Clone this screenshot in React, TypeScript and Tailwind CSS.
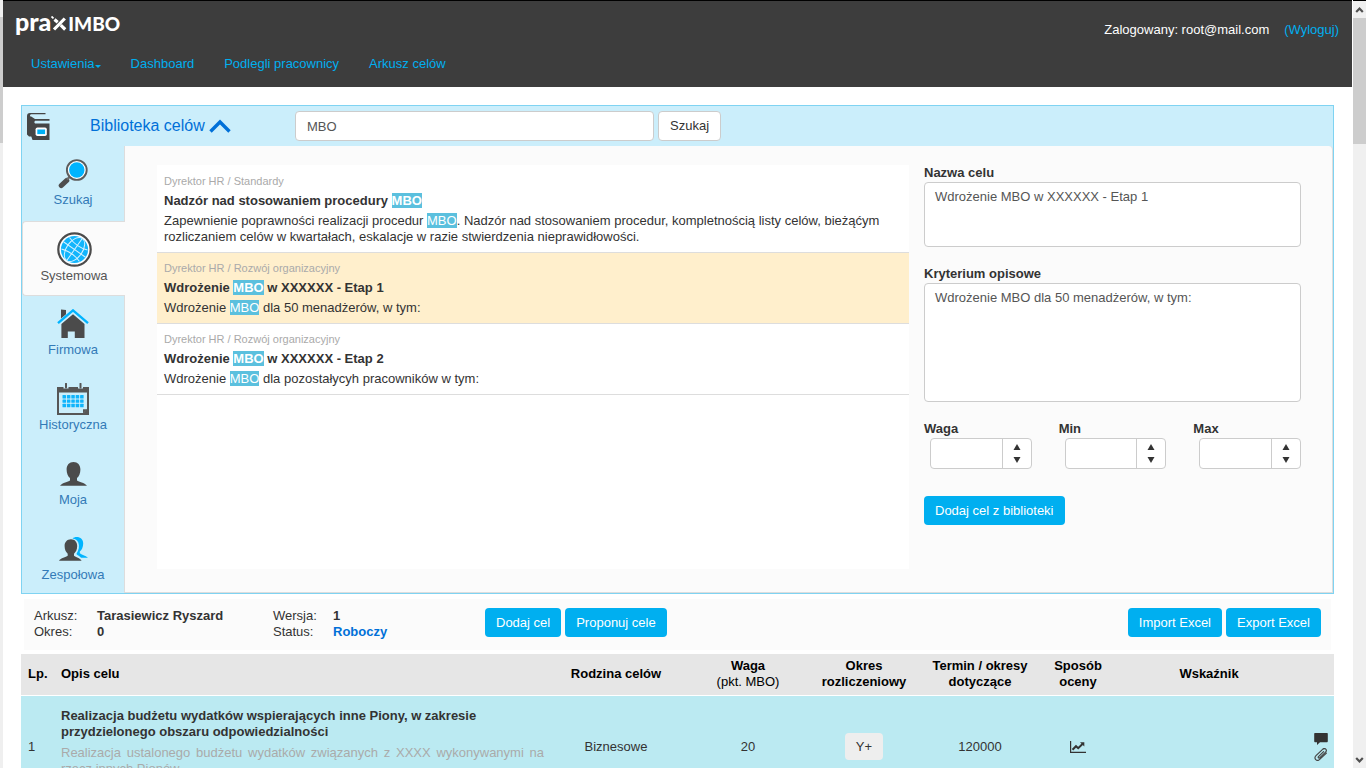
import { useState, type ReactNode } from 'react';
import clsx from 'clsx';

function BookIcon() {
  return (
    <svg width="23" height="27" viewBox="0 0 23 27" aria-hidden="true">
      <path
        fill="#454545"
        d="M0 3C0 1 1 0 3 0H18.500v1.200H4.600C2.800 1.200 2.400 3.400 4.200 3.600L8 5.900H22.500v1.900H8.600C7 7.800 7 10.600 8.600 10.600H22.500V27H5.500l-1.200-3.500H2L0 21.500Z"
      />
      <rect x="8.600" y="14.500" width="11.200" height="8.600" rx="1.800" fill="#fff" />
      <rect x="10.300" y="16.500" width="7.800" height="4.600" fill="#00b0f5" />
    </svg>
  );
}

function SearchIcon() {
  return (
    <svg width="30" height="30" viewBox="0 0 30 30" aria-hidden="true">
      <path d="M3.200 26.600 8.800 21.400" stroke="#4d4d4d" strokeWidth="5" strokeLinecap="round" />
      <path d="m9 20.500 3-3" stroke="#6d6d6d" strokeWidth="2.400" />
      <circle cx="18.800" cy="11" r="9.900" fill="#fff" stroke="#5c5c5c" strokeWidth="1.900" />
      <circle cx="18.800" cy="11" r="7.700" fill="#00b4ff" />
    </svg>
  );
}

function GlobeIcon() {
  return (
    <svg width="35" height="35" viewBox="0 0 35 35" aria-hidden="true">
      <circle cx="17.500" cy="17.500" r="16.200" fill="#fff" stroke="#4b4b4b" strokeWidth="2.200" />
      <circle cx="17.500" cy="17.500" r="13.600" fill="#12b5fc" />
      <g fill="none" stroke="#d5f1ff" strokeWidth="1" transform="rotate(35 17.5 17.5)">
        <ellipse cx="17.500" cy="17.500" rx="8" ry="13.600" />
        <path d="M17.500 4v27M4 17.500h27M6.500 10.500q11 4 22 0M6.500 24.500q11-4 22 0" />
      </g>
    </svg>
  );
}

function HouseIcon() {
  return (
    <svg width="32" height="29" viewBox="0 0 32 29" aria-hidden="true">
      <path fill="#4b4b4b" d="M4 .500 9 1v4.200L4 9.500Z" />
      <path fill="#4b4b4b" d="M16 5.200 27.500 15v14H17.800v-6.600h-7V29H4.400V15Z" />
      <path d="M1 14.200 16 1.400l15 12.800" fill="none" stroke="#00b4ff" strokeWidth="2.400" />
    </svg>
  );
}

function CalendarIcon() {
  return (
    <svg width="32" height="32" viewBox="0 0 32 32" aria-hidden="true">
      <path fill="#565656" fillRule="evenodd" d="M0 4h32v28H0Zm2 5.500V30h24.500l3.500-3.800V9.500Z" />
      <path fill="#565656" d="M26 30.500v-4.300h4.500Z" />
      <path d="M9 0v5.500M23.500 0v5.500" stroke="#cbeefb" strokeWidth="5" />
      <path d="M9 .800v3.800M23.500.800v3.800" stroke="#565656" strokeWidth="2" strokeLinecap="round" />
      {[12, 16.4, 20.8].map((y) =>
        [5.5, 9.9, 14.3, 18.7, 23.1].map((x) => (
          <rect key={`${x}-${y}`} x={x} y={y} width="3.500" height="3.400" rx=".5" fill="#10b4fb" />
        )),
      )}
    </svg>
  );
}

function PersonIcon() {
  return (
    <svg width="27" height="24" viewBox="0 0 27 24" aria-hidden="true">
      <path
        fill="#4b4b4b"
        d="M13.500 0c4.200 0 6.900 3 6.900 7.500 0 4-1.500 7-3.400 8.600v2.300c1.800 1.700 7.600 2 10 5.300H0c2.400-3.300 8.200-3.600 10-5.300v-2.300C8.100 14.500 6.600 11.500 6.600 7.500 6.600 3 9.300 0 13.500 0Z"
      />
    </svg>
  );
}

function TeamIcon() {
  return (
    <svg width="29" height="24" viewBox="0 0 29 24" aria-hidden="true">
      <path
        fill="#00b4ff"
        d="M17.500 0C21.700 0 24.200 2.600 24.200 6.400c0 3.600-1.600 6.700-3.400 8.200v1.700c1.500 1.500 5.700 2.300 8.200 4.400h-7c-1-1.700-3.600-2.300-4.600-3.800 2.400-3.400 3.300-7.600 1.900-11.300C18.400 3.200 16.300 2 13.500 1.500 14.600.500 16 0 17.500 0Z"
      />
      <path
        fill="#4b4b4b"
        d="M12 2.300c3.900 0 6.200 2.800 6.200 6.800 0 3.600-1.500 6.200-3.200 7.600v2c1.700 1.500 6 2 7.600 5H0c1.600-3 7-3.500 8.700-5v-2C7 15.300 5.600 12.700 5.600 9.100c0-4 2.500-6.800 6.400-6.800Z"
      />
    </svg>
  );
}

function ChartIcon() {
  return (
    <svg width="16" height="12" viewBox="0 0 16 12" aria-hidden="true">
      <path d="M.6 0v11.300H16" fill="none" stroke="#333" strokeWidth="1.200" />
      <path d="m2.500 8.800 3.500-3.600 2.200 2L12.500 3" fill="none" stroke="#333" strokeWidth="2" />
      <path d="M10 1.200h4.300v4.300Z" fill="#333" />
    </svg>
  );
}

function CommentIcon() {
  return (
    <svg width="14" height="12" viewBox="0 0 14 12" aria-hidden="true">
      <path d="M.8 0h12.400l.6.600v8l-.6.600H6L3 12V9.200H.8L.2 8.600v-8Z" fill="#333" />
    </svg>
  );
}

function PaperclipIcon() {
  return (
    <svg width="14" height="13" viewBox="0 0 14 13" aria-hidden="true">
      <path
        d="M9.600 3.600 4.500 8.700c-.8.900.3 1.900 1.100 1.200l6-5.800c2.300-2.300-.9-4.800-3-2.700L2 7.600c-2.900 2.900.9 6.500 3.700 3.800l6.700-6.300"
        fill="none"
        stroke="#444"
        strokeWidth="1.200"
        strokeLinecap="round"
      />
    </svg>
  );
}

const navItems = ['Dashboard', 'Podlegli pracownicy', 'Arkusz celów'];

const tabs = [
  { name: 'Szukaj', icon: <SearchIcon /> },
  { name: 'Systemowa', icon: <GlobeIcon /> },
  { name: 'Firmowa', icon: <HouseIcon /> },
  { name: 'Historyczna', icon: <CalendarIcon /> },
  { name: 'Moja', icon: <PersonIcon /> },
  { name: 'Zespołowa', icon: <TeamIcon /> },
];

const goals = [
  {
    category: 'Dyrektor HR / Standardy',
    title: 'Nadzór nad stosowaniem procedury MBO',
    text: 'Zapewnienie poprawności realizacji procedur MBO. Nadzór nad stosowaniem procedur, kompletnością listy celów, bieżąćym rozliczaniem celów w kwartałach, eskalacje w razie stwierdzenia nieprawidłowości.',
  },
  {
    category: 'Dyrektor HR / Rozwój organizacyjny',
    title: 'Wdrożenie MBO w XXXXXX - Etap 1',
    text: 'Wdrożenie MBO dla 50 menadżerów, w tym:',
  },
  {
    category: 'Dyrektor HR / Rozwój organizacyjny',
    title: 'Wdrożenie MBO w XXXXXX - Etap 2',
    text: 'Wdrożenie MBO dla pozostałycyh pracowników w tym:',
  },
];

function Highlight({ text, phrase }: { text: string; phrase: string }) {
  if (!phrase) return <>{text}</>;
  return (
    <>
      {text.split(phrase).map((part, i) => (
        <span key={i}>
          {i > 0 && <mark className="bg-[#5bc0de] text-white">{phrase}</mark>}
          {part}
        </span>
      ))}
    </>
  );
}

function BlueButton({ children }: { children: ReactNode }) {
  return (
    <button className="h-[29px] px-[11px] rounded bg-[#00aff0] text-white hover:bg-[#009bd6]">{children}</button>
  );
}

function NumberField({ id, label }: { id: string; label: string }) {
  const [value, setValue] = useState('');
  const step = (by: number) => setValue(String((Number(value) || 0) + by));

  return (
    <div>
      <label htmlFor={id} className="block h-[17px] font-bold">
        {label}
      </label>
      <div className="ml-1.5 flex h-[31px] rounded border border-[#ccc] bg-white">
        <input
          id={id}
          value={value}
          onChange={(e) => setValue(e.target.value)}
          className="min-w-0 flex-1 px-2 text-[#555] outline-none"
        />
        <div className="flex w-[29px] flex-col items-center justify-center gap-[7px] border-l border-[#ccc]">
          <button aria-label={`${label} +`} onClick={() => step(1)}>
            <svg width="8" height="6" viewBox="0 0 8 6" className="block">
              <path d="M4 0 7.500 6h-7Z" fill="#333" />
            </svg>
          </button>
          <button aria-label={`${label} -`} onClick={() => step(-1)}>
            <svg width="8" height="6" viewBox="0 0 8 6" className="block">
              <path d="M4 6 7.500 0h-7Z" fill="#333" />
            </svg>
          </button>
        </div>
      </div>
    </div>
  );
}

function Header() {
  return (
    <header className="h-[87px] border-t border-black bg-[#3d3d3d]">
      <div className="flex h-[47px] items-start justify-between pl-3 pr-[13px]">
        <a href="#" aria-label="praxIMBO" className="flex items-baseline font-['Lato',sans-serif] font-black leading-[40px] text-white">
          <span className="text-[25px]">pra</span>
          <svg width="17" height="15" viewBox="0 0 17 15" aria-hidden="true">
            <path d="m3.500 3.500 3.200 2.700M9.800 9.200l4.400 4.300M13.800 2.500 3 13.500" stroke="#fff" strokeWidth="3.200" />
            <path d="m.5.500 2 1.800" stroke="#fff" strokeWidth="1.800" />
          </svg>
          <span className="text-[19px]">IMBO</span>
        </a>
        <div className="flex gap-[15px] pt-[21px] text-white">
          <span>Zalogowany: root@mail.com</span>
          <a href="#" className="text-[#00aff0]">
            (Wyloguj)
          </a>
        </div>
      </div>
      <nav className="flex gap-[30px] pl-7 pt-2 text-[#00aff0]">
        <a href="#" className="flex items-center">
          Ustawienia
          <span className="mt-1 border-x-[3px] border-t-[3px] border-x-transparent border-t-[#00aff0]" />
        </a>
        {navItems.map((item) => (
          <a key={item} href="#">
            {item}
          </a>
        ))}
      </nav>
    </header>
  );
}

function Library() {
  const [open, setOpen] = useState(true);
  const [phrase, setPhrase] = useState('MBO');
  const [activeTab, setActiveTab] = useState('Systemowa');
  const [selected, setSelected] = useState(1);

  return (
    <section className="border border-[#7fd3f2] bg-[#cbeefb]">
      <div className="flex h-10 items-center pl-[5px]">
        <BookIcon />
        <button
          onClick={() => setOpen(!open)}
          className="ml-10 flex w-[205px] items-center gap-1 text-base text-[#0070d8]"
        >
          Biblioteka celów
          <svg width="22" height="14" viewBox="0 0 22 14" aria-hidden="true">
            <path d="M1.500 12.500 11 3l9.500 9.500" fill="none" stroke="#0070d8" strokeWidth="3.400" />
          </svg>
        </button>
        <form className="flex gap-1" onSubmit={(e) => e.preventDefault()}>
          <input
            aria-label="Szukaj"
            value={phrase}
            onChange={(e) => setPhrase(e.target.value)}
            className="h-[30px] w-[359px] rounded border border-[#ccc] bg-white px-[11px] text-[#555] outline-none"
          />
          <button className="h-[30px] rounded border border-[#ccc] bg-white px-[11px]">Szukaj</button>
        </form>
      </div>

      {open && (
        <div className="flex">
          <div className="w-[103px] shrink-0">
            {tabs.map((tab) => (
              <button
                key={tab.name}
                onClick={() => setActiveTab(tab.name)}
                className={clsx(
                  'flex h-[75px] w-full flex-col items-center pt-[9px] last:h-[72px]',
                  tab.name === activeTab
                    ? 'rounded-l border-y border-l border-[#ddd] bg-[#fbfbfb] text-[#555]'
                    : 'border-r border-[#ddd] text-[#337ab7]',
                )}
              >
                <span className="flex h-[37px] items-center">{tab.icon}</span>
                {tab.name}
              </button>
            ))}
          </div>

          <div className="flex min-w-0 flex-1 items-start rounded-tr border-b border-r border-[#ddd] bg-[#fbfbfb] self-stretch pt-[19px] pr-[31px] pb-[23px] pl-8">
            <ul className="min-w-0 flex-1 self-stretch bg-white pt-px">
              {goals.map((goal, i) => (
                <li
                  key={goal.title}
                  onClick={() => setSelected(i)}
                  className={clsx(
                    'flex cursor-pointer flex-col gap-1 border-b border-[#ddd] p-[7px]',
                    i === selected && 'bg-[#ffefcc]',
                  )}
                >
                  <span className="text-[11px] text-[#aaa]">{goal.category}</span>
                  <strong>
                    <Highlight text={goal.title} phrase={phrase} />
                  </strong>
                  <p>
                    <Highlight text={goal.text} phrase={phrase} />
                  </p>
                </li>
              ))}
            </ul>

            <div className="ml-[15px] w-[377px] shrink-0">
              <label htmlFor="name" className="block h-[17px] font-bold">
                Nazwa celu
              </label>
              <textarea
                id="name"
                key={`name-${selected}`}
                defaultValue={goals[selected].title}
                className="mb-[19px] block h-[65px] w-full resize-none rounded border border-[#ccc] bg-white px-2.5 py-1.5 text-[#555] outline-none"
              />
              <label htmlFor="criterion" className="block h-[17px] font-bold">
                Kryterium opisowe
              </label>
              <textarea
                id="criterion"
                key={`criterion-${selected}`}
                defaultValue={goals[selected].text}
                className="mb-[19px] block h-[119px] w-full resize-none rounded border border-[#ccc] bg-white px-2.5 py-1.5 text-[#555] outline-none"
              />
              <div className="mb-[27px] grid grid-cols-3 gap-[27px]">
                <NumberField id="weight" label="Waga" />
                <NumberField id="min" label="Min" />
                <NumberField id="max" label="Max" />
              </div>
              <BlueButton>Dodaj cel z biblioteki</BlueButton>
            </div>
          </div>
        </div>
      )}
    </section>
  );
}

function SheetBar() {
  return (
    <section className="mx-[3px] my-1 mt-[5px] flex h-[51px] items-start bg-[#fbfbfb] px-2.5 pt-[9px]">
      <dl className="grid w-[451px] grid-cols-[63px_176px_60px_1fr]">
        <dt>Arkusz:</dt>
        <dd className="font-bold">Tarasiewicz Ryszard</dd>
        <dt>Wersja:</dt>
        <dd className="font-bold">1</dd>
        <dt>Okres:</dt>
        <dd className="font-bold">0</dd>
        <dt>Status:</dt>
        <dd className="font-bold text-[#0070d8]">Roboczy</dd>
      </dl>
      <div className="flex gap-1">
        <BlueButton>Dodaj cel</BlueButton>
        <BlueButton>Proponuj cele</BlueButton>
      </div>
      <div className="ml-auto flex gap-1">
        <BlueButton>Import Excel</BlueButton>
        <BlueButton>Export Excel</BlueButton>
      </div>
    </section>
  );
}

function GoalsTable() {
  return (
    <table className="w-full table-fixed text-center">
      <thead className="bg-[#e6e6e6] text-black">
        <tr className="h-[41px] border-b border-white">
          <th className="w-[35px] pl-[7px] text-left">Lp.</th>
          <th className="px-[5px] text-left">Opis celu</th>
          <th className="w-[134px]">Rodzina celów</th>
          <th className="w-[130px]">
            Waga
            <br />
            <span className="font-normal">(pkt. MBO)</span>
          </th>
          <th className="w-[102px]">
            Okres
            <br />
            rozliczeniowy
          </th>
          <th className="w-[130px]">
            Termin / okresy
            <br />
            dotyczące
          </th>
          <th className="w-[66px]">
            Sposób
            <br />
            oceny
          </th>
          <th className="w-[196px]">Wskaźnik</th>
          <th className="w-[27px]" />
        </tr>
      </thead>
      <tbody>
        <tr className="h-[103px] bg-[#bbeaf2]">
          <td className="pl-[7px] text-left">1</td>
          <td className="px-[5px] pt-3 text-left align-top">
            <strong className="block">
              Realizacja budżetu wydatków wspierających inne Piony, w zakresie przydzielonego obszaru
              odpowiedzialności
            </strong>
            <p className="mt-[5px] text-justify text-[#aaa]">
              Realizacja ustalonego budżetu wydatków związanych z XXXX wykonywanymi na rzecz innych Pionów.
            </p>
          </td>
          <td>Biznesowe</td>
          <td>20</td>
          <td>
            <button className="h-[27px] rounded bg-[#eee] px-[11px]">Y+</button>
          </td>
          <td>120000</td>
          <td>
            <span className="flex justify-center">
              <ChartIcon />
            </span>
          </td>
          <td />
          <td>
            <span className="flex flex-col items-center gap-[3px]">
              <CommentIcon />
              <PaperclipIcon />
            </span>
          </td>
        </tr>
      </tbody>
    </table>
  );
}

export default function App() {
  return (
    <div className="flex h-screen overflow-hidden bg-white font-['Liberation_Sans',Arial,sans-serif] text-[13px] leading-4 text-[#333]">
      <div className="w-[3px] shrink-0 bg-[#efefef] pt-[17px]">
        <div className="h-[126px] bg-[#cdcdcd]" />
      </div>

      <div className="min-w-0 flex-1">
        <Header />
        <main className="px-[18px] pt-[18px]">
          <Library />
          <SheetBar />
          <GoalsTable />
        </main>
      </div>

      <div className="ml-px flex w-[13px] shrink-0 flex-col items-center border-t border-black bg-[#f0f0f0]">
        <svg width="9" height="17" viewBox="0 0 9 17" className="shrink-0" aria-hidden="true">
          <path d="m1.200 11 3.300-3.400L7.800 11" fill="none" stroke="#505050" strokeWidth="2.200" />
        </svg>
        <div className="h-[126px] w-full bg-[#cdcdcd]" />
        <svg width="9" height="17" viewBox="0 0 9 17" className="mt-auto shrink-0" aria-hidden="true">
          <path d="m1.200 7 3.300 3.400L7.800 7" fill="none" stroke="#505050" strokeWidth="2.200" />
        </svg>
      </div>
    </div>
  );
}
